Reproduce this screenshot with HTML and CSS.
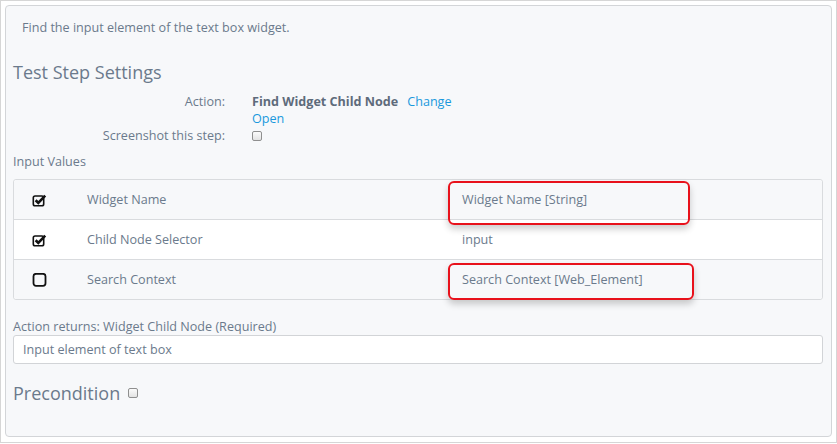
FILE: index.html
```html
<!DOCTYPE html>
<html>
<head>
<meta charset="utf-8">
<link rel="stylesheet" href="styles.css">
</head>
<body>
<div class="frame">
  <div class="panel">
    <p class="desc">Find the input element of the text box widget.</p>
    <h2 class="heading">Test Step Settings</h2>
    <div class="settings">
      <div class="label">Action:</div>
      <div class="value"><strong>Find Widget Child Node</strong><a class="link change">Change</a><br><a class="link">Open</a></div>
      <div class="label">Screenshot this step:</div>
      <div class="value"><span class="cb"></span></div>
    </div>
    <div class="section-label">Input Values</div>
    <div class="table">
      <div class="row striped">
        <div class="cell c1"><svg class="chk" viewBox="0 0 16 14" width="16" height="14"><rect x="1.3" y="3" width="10.4" height="9.7" rx="1.8" fill="none" stroke="#111" stroke-width="1.6"/><path d="M3.6 7.2 L6.3 9.8 L13.2 2.6" fill="none" stroke="#111" stroke-width="2.6" stroke-linejoin="miter"/></svg></div>
        <div class="cell c2">Widget Name</div>
        <div class="cell c3">Widget Name [String]<span class="hl hl1"></span></div>
      </div>
      <div class="row">
        <div class="cell c1"><svg class="chk" viewBox="0 0 16 14" width="16" height="14"><rect x="1.3" y="3" width="10.4" height="9.7" rx="1.8" fill="none" stroke="#111" stroke-width="1.6"/><path d="M3.6 7.2 L6.3 9.8 L13.2 2.6" fill="none" stroke="#111" stroke-width="2.6" stroke-linejoin="miter"/></svg></div>
        <div class="cell c2">Child Node Selector</div>
        <div class="cell c3">input</div>
      </div>
      <div class="row striped">
        <div class="cell c1"><svg class="chk" viewBox="0 0 16 14" width="16" height="14"><rect x="1.5" y="0.8" width="12" height="12" rx="2.5" fill="none" stroke="#111" stroke-width="1.8"/></svg></div>
        <div class="cell c2">Search Context</div>
        <div class="cell c3">Search Context [Web_Element]<span class="hl hl2"></span></div>
      </div>
    </div>
    <div class="returns-label">Action returns: Widget Child Node (Required)</div>
    <div class="input">Input element of text box</div>
    <h2 class="heading precond">Precondition <span class="cb cb-inline"></span></h2>
  </div>
</div>
</body>
</html>
```

FILE: styles.css
```css
* { box-sizing: border-box; }
html, body { margin: 0; padding: 0; background: #fff; }
body {
  font-family: "Open Sans", "Liberation Sans", sans-serif;
  font-size: 12.6px;
  color: #6b7a8c;
  width: 837px;
  height: 444px;
  overflow: hidden;
}
.frame {
  width: 837px;
  height: 443px;
  border: 1px solid #d6d6d6;
  padding: 4px 4px 5px 4px;
}
.panel {
  height: 432px;
  border: 1px solid #d3d5d8;
  border-radius: 4px;
  background: #f7f8fa;
  padding: 0 8px 0 7px;
}
.desc {
  margin: 0;
  padding: 13px 0 0 9px;
  line-height: 17px;
}
.heading {
  margin: 24px 0 0 0;
  font-weight: normal;
  font-size: 18px;
  line-height: 24px;
  color: #6b7a8c;
}
.settings {
  display: grid;
  grid-template-columns: 212px 1fr;
  column-gap: 27px;
  margin-top: 9px;
  line-height: 17px;
}
.label { text-align: right; }
.value strong { color: #5e6b7b; font-weight: 700; }
.link { color: #1a98dd; text-decoration: none; }
.change { margin-left: 9px; }
.cb {
  display: inline-block;
  width: 10px;
  height: 10px;
  border: 1px solid #8f8f8f;
  border-radius: 2px;
  background: linear-gradient(#fbfbfb, #e3e3e3);
  vertical-align: middle;
  position: relative;
  top: -1px;
}
.section-label {
  margin-top: 9px;
  line-height: 17px;
}
.table {
  margin-top: 9px;
  border: 1px solid #d9dbde;
  border-radius: 3px;
  background: #fff;
}
.row {
  display: grid;
  grid-template-columns: 60px 375px 1fr;
  height: 40px;
  align-items: center;
  border-top: 1px solid #d9dbde;
}
.row:first-child { border-top: none; height: 39px; }
.row.striped { background: #f7f8fa; }
.row:first-child { border-radius: 3px 3px 0 0; }
.row:last-child { border-radius: 0 0 3px 3px; }
.cell { line-height: 17px; }
.c1 { padding-left: 18px; display: flex; align-items: center; }
.chk { display: block; }
.c2 { padding-left: 13px; }
.c3 { padding-left: 13px; position: relative; }
.hl {
  position: absolute;
  border: 2px solid #e8111b;
  border-radius: 6px;
  box-shadow: 0 4px 7px rgba(0,0,0,0.2);
  pointer-events: none;
}
.hl1 { left: -1px; top: -10px; width: 242px; height: 44px; }
.hl2 { left: -1px; top: -8px; width: 246px; height: 37px; }
.returns-label {
  margin-top: 18px;
  line-height: 17px;
}
.input {
  height: 29px;
  border: 1px solid #d2d4d7;
  border-radius: 3px;
  background: #fff;
  padding: 0 9px;
  line-height: 27px;
}
.precond { margin-top: 17px; }
.cb-inline { margin-left: 3px; top: -2px; }
```
